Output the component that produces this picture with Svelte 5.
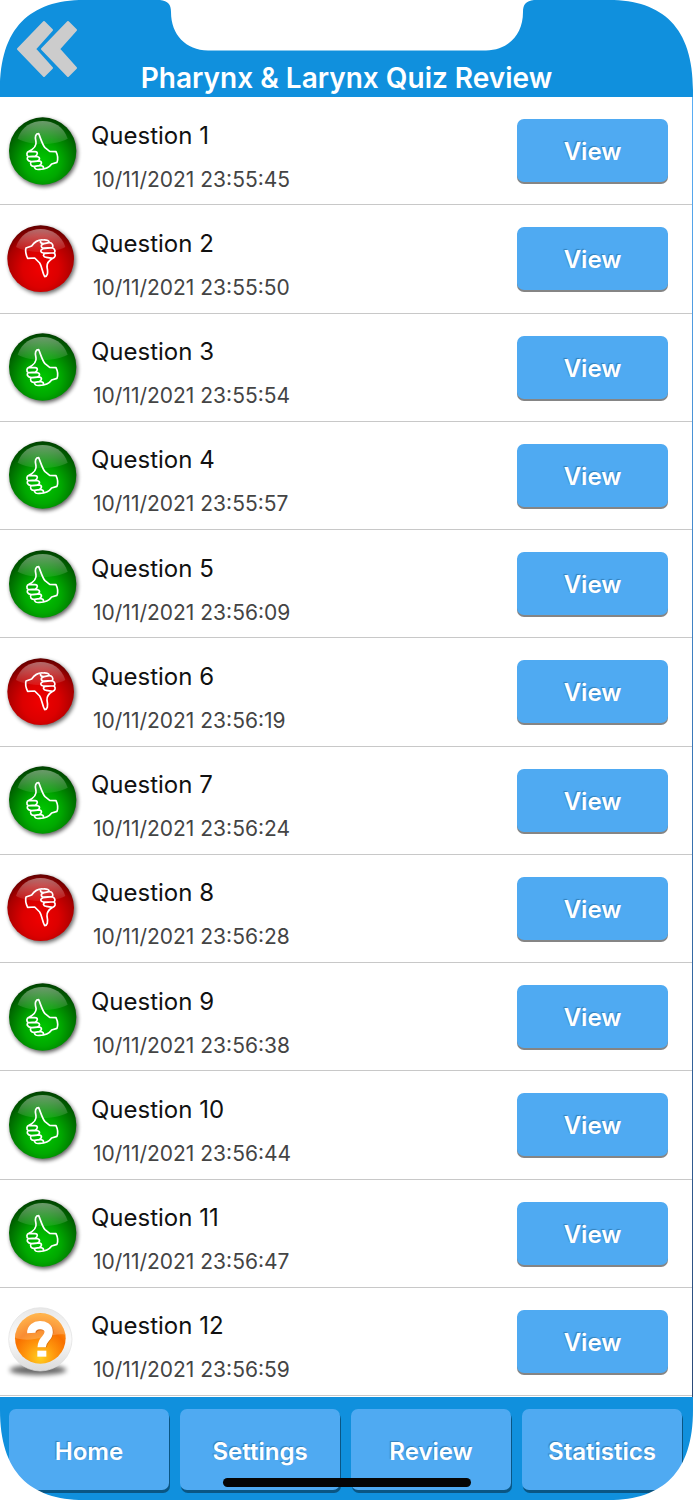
<script>
  const items = [
    ['up', '23:55:45'], ['down', '23:55:50'], ['up', '23:55:54'], ['up', '23:55:57'],
    ['up', '23:56:09'], ['down', '23:56:19'], ['up', '23:56:24'], ['down', '23:56:28'],
    ['up', '23:56:38'], ['up', '23:56:44'], ['up', '23:56:47'], ['unknown', '23:56:59']
  ];
  const tabs = ['Home', 'Settings', 'Review', 'Statistics'];
  const labels = { up: 'Correct', down: 'Incorrect', unknown: 'Unanswered' };
</script>

<svelte:head><title>Pharynx &amp; Larynx Quiz Review</title></svelte:head>

<svg class="defs" aria-hidden="true">
  <defs>
    <radialGradient id="green" cx="50%" cy="66%" r="68%">
      <stop offset="0" stop-color="#00c800" /><stop offset=".4" stop-color="#00a800" />
      <stop offset=".75" stop-color="#006c00" /><stop offset="1" stop-color="#003a00" />
    </radialGradient>
    <radialGradient id="red" cx="50%" cy="66%" r="68%">
      <stop offset="0" stop-color="#f00000" /><stop offset=".4" stop-color="#dc0000" />
      <stop offset=".75" stop-color="#a80000" /><stop offset="1" stop-color="#560000" />
    </radialGradient>
    <radialGradient id="orange" cx="50%" cy="88%" r="85%">
      <stop offset="0" stop-color="#ffd020" /><stop offset=".35" stop-color="#ff960c" />
      <stop offset=".65" stop-color="#f87000" /><stop offset="1" stop-color="#ffa020" />
    </radialGradient>
    <linearGradient id="gloss" x1="0" y1="0" x2="0" y2="1">
      <stop offset="0" stop-color="#fff" stop-opacity=".42" /><stop offset="1" stop-color="#fff" stop-opacity=".08" />
    </linearGradient>
    <linearGradient id="ring" x1="0" y1="0" x2="0" y2="1">
      <stop offset="0" stop-color="#e8e8e8" /><stop offset=".5" stop-color="#fafafa" /><stop offset="1" stop-color="#dadada" />
    </linearGradient>
    <filter id="soft" x="-30%" y="-60%" width="160%" height="220%"><feGaussianBlur stdDeviation="6" /></filter>
    <filter id="softer" x="-30%" y="-80%" width="160%" height="260%"><feGaussianBlur stdDeviation="8" /></filter>
  </defs>
</svg>

<div class="page">
  <header>
    <button class="back" aria-label="Back">
      <svg viewBox="0 0 62 58" aria-hidden="true">
        <g fill="#ccc" stroke="#ccc" stroke-width="2" stroke-linejoin="round">
          <path d="M28 2 L36 10 L19 29 L36 48 L28 56 L2 29 Z" />
          <path d="M52 2 L60 10 L43 29 L60 48 L52 56 L26 29 Z" />
        </g>
      </svg>
    </button>
    <h1>Pharynx &amp; Larynx Quiz Review</h1>
    <svg class="notch" viewBox="0 0 374 51" aria-hidden="true">
      <path fill="#fff" d="M0 0 C8 1 11 4 11 12 C11 35 26 50 48 50.500 H326 C348 50 363 35 363 12 C363 4 366 1 374 0 Z" />
    </svg>
  </header>

  <ul>
    {#each items as [status, time], i}
      <li>
        <svg class="status" viewBox="0 0 270 270" role="img" aria-label={labels[status]}>
          {#if status === 'up'}
            <circle cx="132" cy="141" r="101" fill="#000" opacity=".65" filter="url(#soft)" />
            <circle cx="128" cy="135" r="101" fill="url(#green)" />
            <path d="M53 98 C65 62 95 45 128 45 C161 45 191 62 203 98 C165 119 91 119 53 98 Z" fill="url(#gloss)" />
            <path class="hand" d="M87 136 C98 130 110 119 108 108 C103 90 108 83 116 83 C122 97 127 116 135 125 L149 136 L168 137 C173 147 175 158 171 169 L155 174 C145 188 133 190 119 190 C108 192 102 187 104 181 C93 183 89 173 93 167 C81 165 79 156 85 152 C78 147 80 138 87 136 L105 137 C115 138 113 147 106 150 L88 152 M90 152 L113 152 C122 155 119 164 111 165 L94 167 M99 167 L119 165 C128 168 124 177 117 179 L104 181 M114 180 C124 177 132 180 130 187" />
          {:else if status === 'down'}
            <g transform="translate(0 3)">
              <circle cx="127" cy="137" r="100" fill="#000" opacity=".6" filter="url(#soft)" />
              <circle cx="122" cy="131" r="100" fill="url(#red)" />
              <path d="M48 96 C59 60 89 42 122 42 C155 42 185 60 196 96 C159 116 85 116 48 96 Z" fill="url(#gloss)" />
              <path class="hand" d="M78 99 L95 93 C105 79 117 74 129 75 C141 74 149 78 147 83 C156 82 161 91 157 98 C165 101 167 110 162 114 C168 119 166 128 158 130 C148 136 140 142 141 156 C145 176 142 184 134 185 C127 174 126 154 119 144 L104 129 L83 130 C78 120 75 110 78 99 M147 83 L132 86 C121 89 122 98 130 99 L157 98 M150 99 L129 101 C119 105 121 113 130 114 L162 114 M153 114 L136 115 C127 119 130 127 139 127 L158 130 M132 86 C122 86 119 81 123 77" />
            </g>
          {:else}
            <g transform="translate(0 -4)">
              <ellipse cx="114" cy="226" rx="85" ry="15" fill="#000" opacity=".6" filter="url(#softer)" />
              <circle cx="121" cy="134" r="95" fill="url(#ring)" stroke="#e0e0e0" stroke-width="2" />
              <circle cx="121" cy="131" r="76" fill="url(#orange)" />
              <path d="M47 130 C44 83 80 56 121 56 C162 56 198 84 195 120 C160 112 100 148 47 130 Z" fill="#fff" opacity=".2" />
              <path d="M97 115 C96 88 149 87 148 113 C147 133 128 133 128 158" fill="none" stroke="#b64d00" stroke-opacity=".5" stroke-width="25" />
              <path d="M94 115 C92 84 147 84 146 112 C146 133 125 132 125 158" fill="none" stroke="#fff" stroke-width="25" />
              <rect x="112" y="168" width="27" height="18" fill="#fff" />
            </g>
          {/if}
        </svg>
        <div class="info">
          <h2>Question {i + 1}</h2>
          <time>10/11/2021 {time}</time>
        </div>
        <button class="view" aria-label="View question {i + 1}">View</button>
      </li>
    {/each}
  </ul>

  <nav>
    {#each tabs as tab}
      <button>{tab}</button>
    {/each}
    <span class="indicator"></span>
  </nav>

  {#each ['tl', 'tr', 'bl', 'br'] as corner}
    <svg class="corner {corner}" viewBox="0 0 96 96" aria-hidden="true">
      <path fill="#fff" d="M0 0 H84 C30 0 0 28 0 90 Z" />
    </svg>
  {/each}
</div>

<style>
  :global(body) { margin: 0; background: #fff; }
  * { box-sizing: border-box; }
  .defs { position: absolute; width: 0; height: 0; }
  .page {
    position: relative;
    display: flex;
    flex-direction: column;
    min-height: 100vh;
    font-family: Inter, "Liberation Sans", sans-serif;
    background: #fff;
  }
  button { border: 0; padding: 0; font: inherit; cursor: pointer; }
  header {
    position: relative;
    height: 97px;
    flex: none;
    display: flex;
    align-items: flex-end;
    justify-content: center;
    background: #1090dd;
  }
  h1 { margin: 0; font-size: 28px; line-height: 38px; font-weight: 600; color: #fff; white-space: nowrap; }
  .back { position: absolute; left: 16px; top: 20px; width: 62px; height: 58px; background: none; }
  .back svg { display: block; width: 100%; height: 100%; }
  .notch { position: absolute; top: 0; left: 50%; width: 374px; height: 51px; margin-left: -187px; }
  ul {
    flex: 1;
    display: grid;
    grid-auto-rows: minmax(108px, 1fr);
    margin: 0;
    padding: 0 1px 1px 0;
    list-style: none;
    background: linear-gradient(#5aaef5, #3a78b8 50%, #2b4a78) right / 1px 100% no-repeat;
  }
  li { display: flex; align-items: center; padding-right: 24px; border-bottom: 1px solid #c8c8c8; }
  .status { width: 90px; height: 90px; flex: none; }
  .hand { fill: none; stroke: #fff; stroke-width: 5; stroke-linejoin: round; stroke-linecap: round; }
  .info { flex: 1; display: grid; gap: 12px; padding: 14px 0 0 1px; }
  h2 { margin: 0; font-size: 24px; line-height: 32px; font-weight: 400; color: #111; }
  time { padding-left: 2px; font-size: 21px; line-height: 32px; color: #444; }
  .view, nav button {
    color: #fff;
    font-size: 24px;
    font-weight: 600;
    background: #4faaf2;
    border-radius: 7px;
    text-shadow: -1px -1px 1px #3580ba;
  }
  .view { width: 151px; height: 63px; padding-top: 2px; box-shadow: 0 2px 0 #858585; }
  nav {
    position: relative;
    flex: none;
    height: 103px;
    display: grid;
    grid-template-columns: repeat(4, 1fr);
    gap: 11px;
    padding: 12px 11px 10px 9px;
    background: #1090dd;
  }
  nav button { box-shadow: 1px 3px 0 #0a5684; padding-top: 4px; }
  .indicator {
    position: absolute; left: 50%; bottom: 13px; width: 248px; height: 9px;
    margin-left: -124px; border-radius: 5px; background: #050505;
  }
  .corner { position: absolute; width: 96px; height: 96px; pointer-events: none; }
  .tl { left: 0; top: 0; }
  .tr { right: 0; top: 0; transform: scaleX(-1); }
  .bl { left: 0; bottom: 0; transform: scaleY(-1); }
  .br { right: 0; bottom: 0; transform: scale(-1); }
</style>
